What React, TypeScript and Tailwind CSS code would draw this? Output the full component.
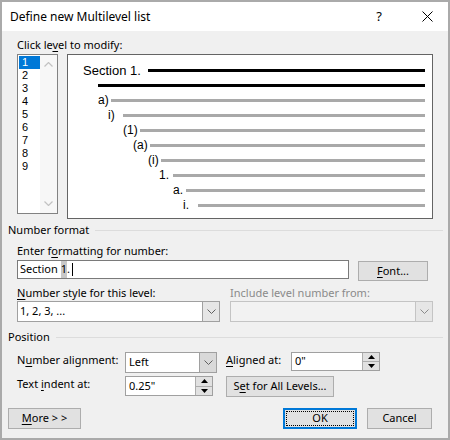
import React from 'react';

const UI = "font-['Noto_Sans',sans-serif] text-[11px] text-black";
const ARIAL = "font-['Liberation_Sans',Arial,sans-serif]";

function Key({ children }: { children: React.ReactNode }) {
  return <span className="underline decoration-1 underline-offset-[2px]">{children}</span>;
}

function Chevron({ color = '#606060' }: { color?: string }) {
  return (
    <svg width="9" height="5" viewBox="0 0 9 5" fill="none">
      <path d="M0.5 0.5 L4.5 4.5 L8.5 0.5" stroke={color} strokeWidth="1" />
    </svg>
  );
}

function SpinArrows() {
  return (
    <div className="flex flex-col w-[17px] h-full border-l border-[#adadad] bg-[#e1e1e1]">
      <div className="flex-1 flex items-center justify-center border-b border-[#adadad]">
        <svg width="7" height="4" viewBox="0 0 7 4">
          <path d="M0 4 L3.5 0 L7 4 Z" fill="#000" />
        </svg>
      </div>
      <div className="flex-1 flex items-center justify-center">
        <svg width="7" height="4" viewBox="0 0 7 4">
          <path d="M0 0 L3.5 4 L7 0 Z" fill="#000" />
        </svg>
      </div>
    </div>
  );
}

function Button({ className, children }: { className: string; children: React.ReactNode }) {
  return (
    <div className={`flex items-center justify-center border border-[#adadad] bg-[#e1e1e1] ${className}`}>
      {children}
    </div>
  );
}

function GroupHeader({ title }: { title: string }) {
  return (
    <div className="flex items-center gap-[6px] pl-[6px] pr-[5px] h-[14px] leading-[14px]">
      <span>{title}</span>
      <div className="flex-1 h-px bg-[#dcdcdc]" />
    </div>
  );
}

const LEVELS = ['1', '2', '3', '4', '5', '6', '7', '8', '9'];

const SUB_ROWS = [
  { label: 'a)', pad: 'pl-[30px]', w: 'w-[13px]' },
  { label: 'i)', pad: 'pl-[40px]', w: 'w-[15px]' },
  { label: '(1)', pad: 'pl-[55px]', w: 'w-[17px]' },
  { label: '(a)', pad: 'pl-[65px]', w: 'w-[17px]' },
  { label: '(i)', pad: 'pl-[80px]', w: 'w-[13px]' },
  { label: '1.', pad: 'pl-[91px]', w: 'w-[14px]' },
  { label: 'a.', pad: 'pl-[105px]', w: 'w-[13px]' },
  { label: 'i.', pad: 'pl-[115px]', w: 'w-[15px]' },
];

function Preview() {
  return (
    <div className={`w-[366px] h-[165px] border border-[#646464] bg-white pt-[8px] pr-[7px] ${ARIAL}`}>
      <div className="flex items-center h-[15px] pl-[15px]">
        <span className="w-[65px] text-[13px] leading-[15px]">Section 1.</span>
        <div className="flex-1 h-[3px] bg-black" />
      </div>
      <div className="flex items-center h-[15px] pl-[30px]">
        <div className="flex-1 h-[3px] bg-black" />
      </div>
      {SUB_ROWS.map((r) => (
        <div key={r.label} className={`flex items-center h-[15px] ${r.pad}`}>
          <span className={`${r.w} text-[12px] leading-[15px]`}>{r.label}</span>
          <div className="flex-1 h-[3px] bg-[#a9a9a9]" />
        </div>
      ))}
    </div>
  );
}

function LevelList() {
  return (
    <div className="flex w-[41px] h-[160px] border border-[#828282] bg-white">
      <div className={`flex flex-col w-[22px] pt-px pl-px ${ARIAL}`}>
        {LEVELS.map((l, i) => (
          <div
            key={l}
            className={`h-[13px] leading-[13px] text-[11px] pl-[3px] ${i === 0 ? 'bg-[#0078d7] text-white' : ''}`}
          >
            {l}
          </div>
        ))}
      </div>
      <div className="flex flex-col justify-between items-center flex-1 bg-[#f7f7f7] py-[7px]">
        <svg width="9" height="5" viewBox="0 0 9 5" fill="none">
          <path d="M0.5 4.5 L4.5 0.5 L8.5 4.5" stroke="#c2c2c2" strokeWidth="1.2" />
        </svg>
        <svg width="9" height="5" viewBox="0 0 9 5" fill="none">
          <path d="M0.5 0.5 L4.5 4.5 L8.5 0.5" stroke="#c2c2c2" strokeWidth="1.2" />
        </svg>
      </div>
    </div>
  );
}

export default function App() {
  return (
    <div className={`w-[450px] h-[440px] border-2 border-[#aaaaaa] bg-[#f0f0f0] flex flex-col ${UI}`}>
      {/* Title bar */}
      <div className="flex items-center h-[29px] bg-white pl-[8px] pr-[15px]">
        <span className="flex-1 text-[12px]">Define new Multilevel list</span>
        <span className="text-[13px] mr-[40px]">?</span>
        <svg width="11" height="11" viewBox="0 0 11 11" fill="none">
          <path d="M0.5 0.5 L10.5 10.5 M10.5 0.5 L0.5 10.5" stroke="#000" strokeWidth="1" />
        </svg>
      </div>

      {/* Level + preview */}
      <div className="mt-[7px] pl-[15px] h-[14px] leading-[14px]">
        Click le<Key>v</Key>el to modify:
      </div>
      <div className="mt-[2px] pl-[15px] flex items-start gap-[9px] h-[165px]">
        <LevelList />
        <Preview />
      </div>

      {/* Number format */}
      <div className="mt-[4px]">
        <GroupHeader title="Number format" />
      </div>
      <div className="mt-[7px] pl-[15px] h-[14px] leading-[14px]">
        Enter f<Key>o</Key>rmatting for number:
      </div>
      <div className="mt-[2px] pl-[15px] flex items-start gap-[9px] h-[21px]">
        <div className="w-[332px] h-[19px] border border-[#7a7a7a] bg-white flex items-center pl-[2px] whitespace-pre">
          <span>{'Section '}</span>
          <span className="bg-[#c8c8c8]">1</span>
          <span>.</span>
          <span className="ml-[2px] w-px h-[13px] bg-black" />
        </div>
        <Button className="w-[70px] h-[20px] mt-px">
          <span><Key>F</Key>ont...</span>
        </Button>
      </div>
      <div className="mt-[5px] pl-[15px] flex gap-[10px] h-[14px] leading-[14px]">
        <span className="w-[203px]"><Key>N</Key>umber style for this level:</span>
        <span className="text-[#8a8a8a]">Include level number from:</span>
      </div>
      <div className="mt-px pl-[15px] flex gap-[10px] h-[21px]">
        <div className="w-[203px] h-[21px] border border-[#a0a0a0] bg-white flex">
          <span className="flex-1 flex items-center pl-[2px]">1, 2, 3, ...</span>
          <div className="w-[17px] border-l border-[#a0a0a0] bg-[#e6e6e6] flex items-center justify-center">
            <Chevron />
          </div>
        </div>
        <div className="w-[203px] h-[21px] border border-[#c4c4c4] bg-[#f2f2f2] flex">
          <span className="flex-1" />
          <div className="w-[17px] border-l border-[#c4c4c4] bg-[#e6e6e6] flex items-center justify-center">
            <Chevron color="#8a8a8a" />
          </div>
        </div>
      </div>

      {/* Position */}
      <div className="mt-[8px]">
        <GroupHeader title="Position" />
      </div>
      <div className="mt-[8px] pl-[15px] flex items-start h-[21px]">
        <span className="w-[108px] h-[14px] leading-[14px] mt-[1px]">
          N<Key>u</Key>mber alignment:
        </span>
        <div className="w-[92px] h-[21px] border border-[#a0a0a0] bg-white flex">
          <span className="flex-1 flex items-center pl-[3px]">Left</span>
          <div className="w-[17px] border-l border-[#a0a0a0] bg-[#d9d9d9] flex items-center justify-center">
            <Chevron />
          </div>
        </div>
        <span className="ml-[9px] w-[65px] h-[14px] leading-[14px] mt-[1px]">
          <Key>A</Key>ligned at:
        </span>
        <div className="w-[89px] h-[19px] border border-[#a0a0a0] bg-white flex">
          <span className="flex-1 flex items-center pl-[3px]">0"</span>
          <SpinArrows />
        </div>
      </div>
      <div className="mt-[3px] pl-[15px] flex items-start h-[21px]">
        <span className="w-[108px] h-[14px] leading-[14px] mt-[1px]">
          Text <Key>i</Key>ndent at:
        </span>
        <div className="w-[88px] h-[20px] border border-[#a0a0a0] bg-white flex">
          <span className="flex-1 flex items-center pl-[3px]">0.25"</span>
          <SpinArrows />
        </div>
        <Button className="ml-[13px] w-[108px] h-[21px]">
          <span>S<Key>e</Key>t for All Levels...</span>
        </Button>
      </div>

      {/* Bottom buttons */}
      <div className="mt-[11px] pl-[6px] flex h-[21px]">
        <Button className="w-[73px] h-[21px]">
          <span><Key>M</Key>ore &gt; &gt;</span>
        </Button>
        <div className="ml-[202px] w-[74px] h-[21px] border-2 border-[#0078d7] bg-[#e1e1e1] p-px">
          <div className="w-full h-full border border-dotted border-black flex items-center justify-center">
            OK
          </div>
        </div>
        <Button className="ml-[10px] w-[65px] h-[21px]">
          <span>Cancel</span>
        </Button>
      </div>
    </div>
  );
}
